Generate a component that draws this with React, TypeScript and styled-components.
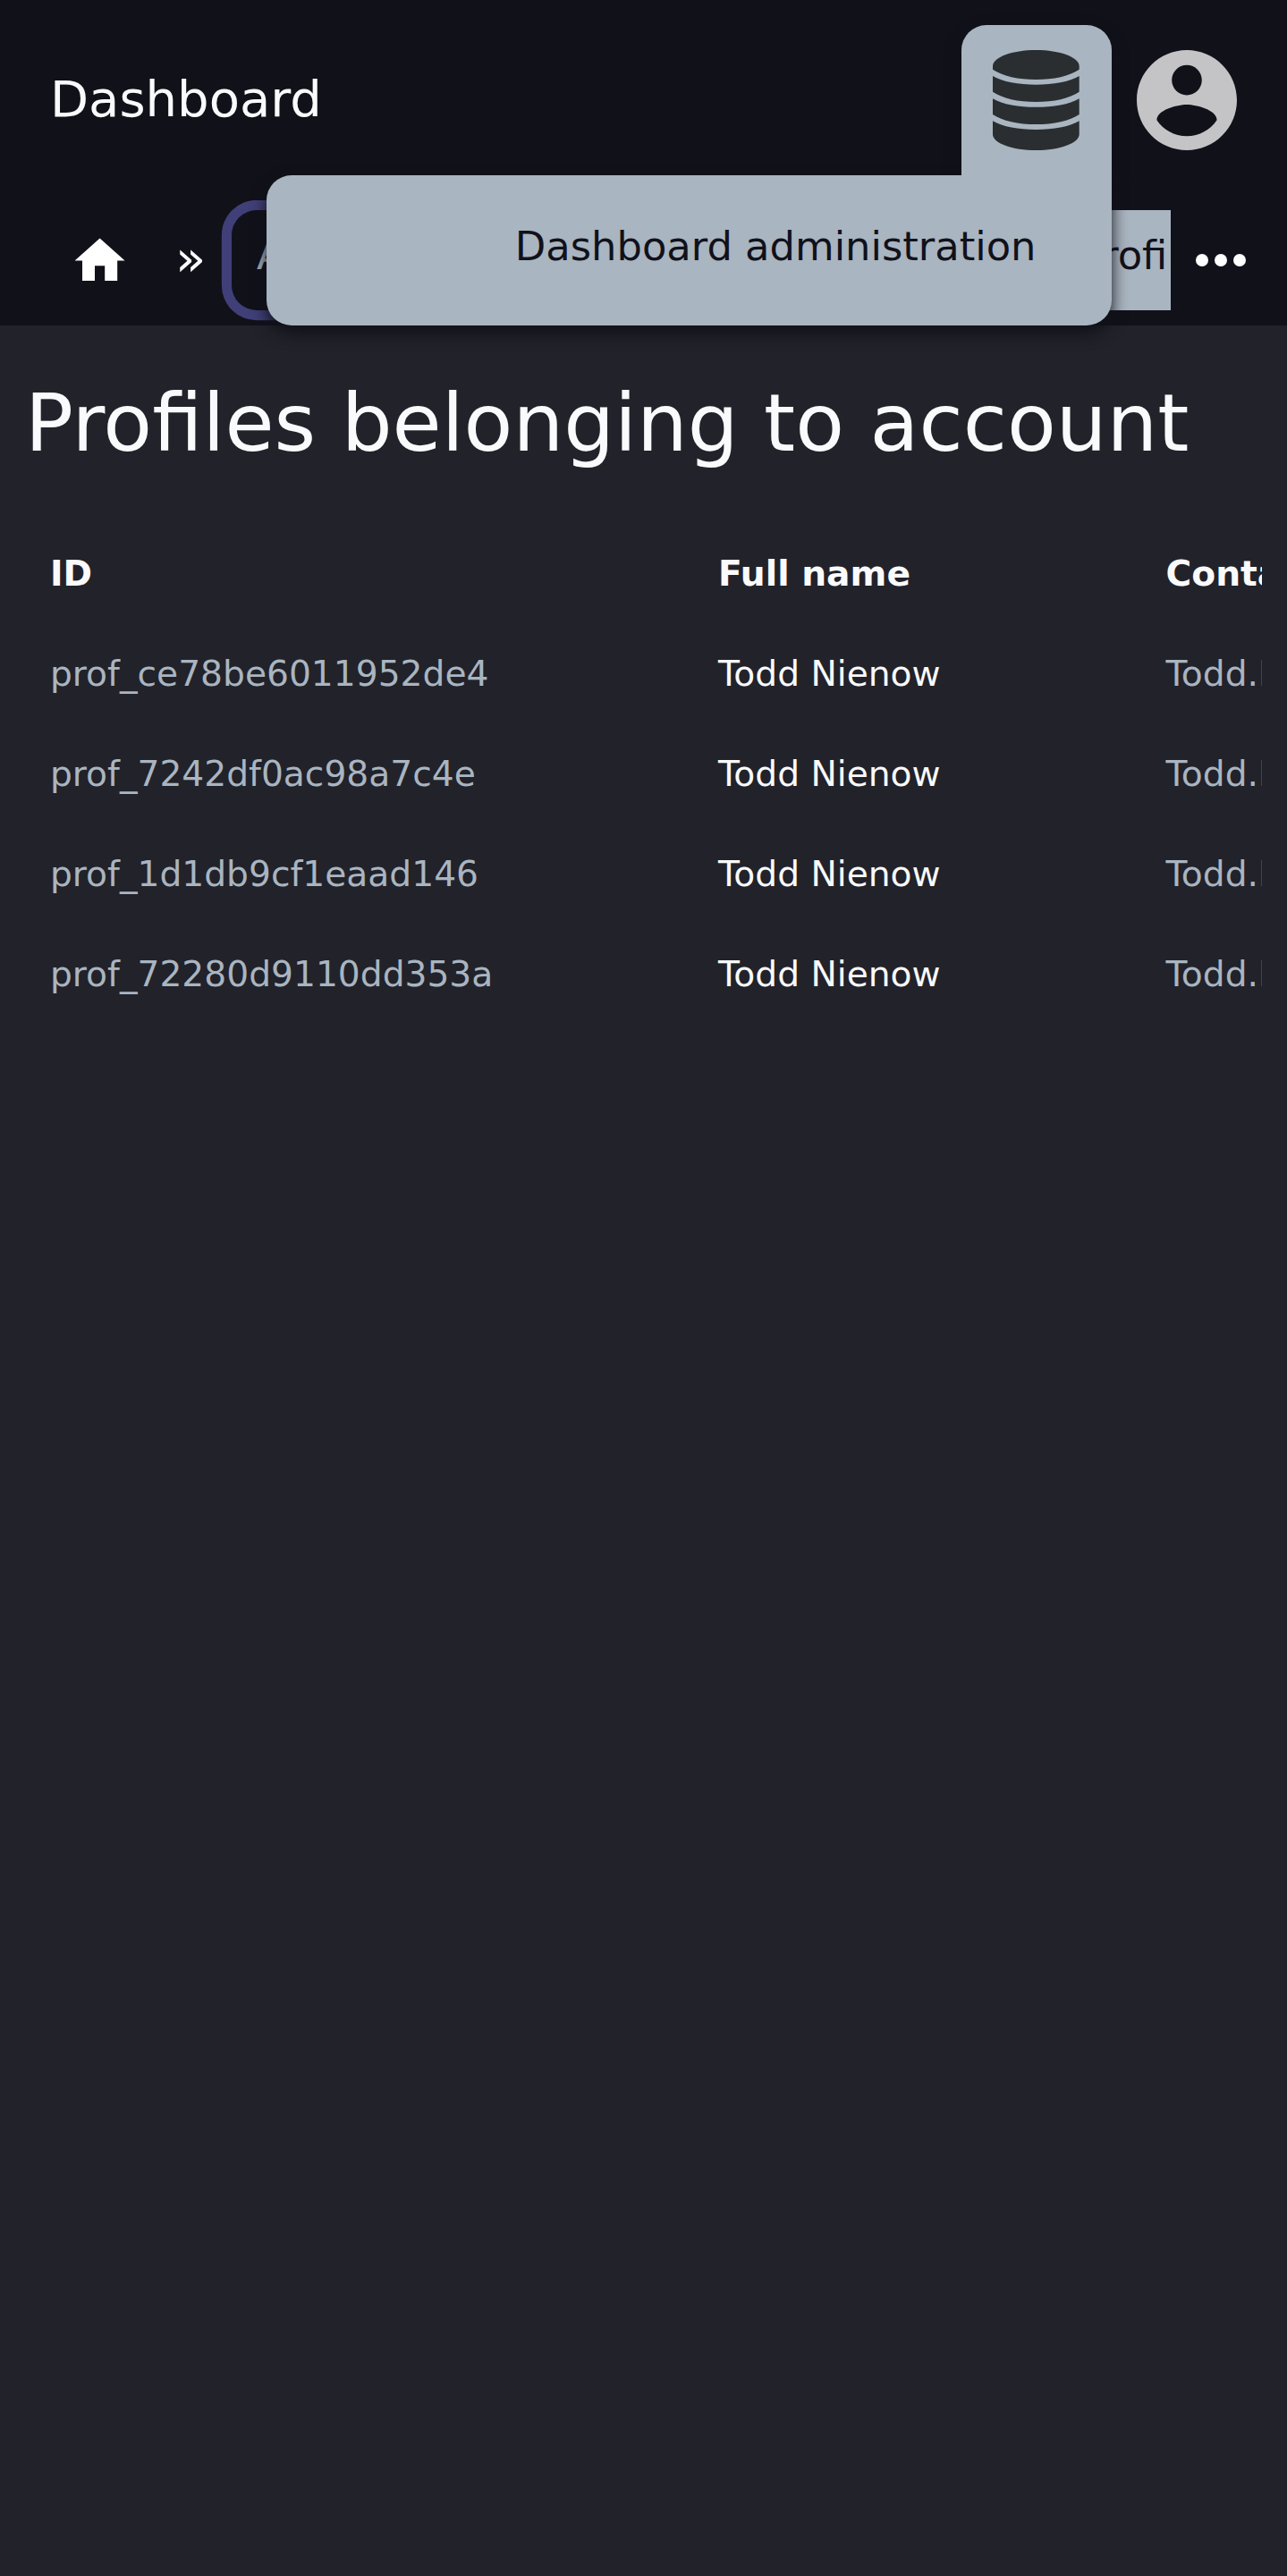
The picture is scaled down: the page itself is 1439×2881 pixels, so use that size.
import React from 'react';
import styled, { createGlobalStyle, css } from 'styled-components';

const color = {
  header: '#11111a',
  page: '#22222a',
  text: '#f9fafb',
  muted: '#a9b5c0',
  focus: '#403f78',
  avatar: '#c4c4c6',
  database: '#2a2e30',
};

const GlobalStyle = createGlobalStyle`
  *, *::before, *::after { box-sizing: border-box; }
  html { font-size: 56px; }
  body {
    margin: 0;
    background: ${color.page};
    color: ${color.text};
    font-family: 'DejaVu Sans', sans-serif;
    overflow: hidden;
  }
  svg { display: block; }
`;

const Page = styled.div`
  min-height: 2881px;
  background: ${color.page};
`;

const Header = styled.header`
  height: 6.5rem;
  background: ${color.header};
`;

const TitleBar = styled.div`
  display: flex;
  align-items: center;
  height: 4rem;
  padding: 0 56.5px 0 1rem;
`;

const Brand = styled.div`
  flex: 1;
  font-size: 1rem;
  line-height: 65px;
  padding-bottom: 3px;
`;

const floating = css`
  background: ${color.muted};
  box-shadow: 0 0.15rem 0.3rem ${color.header};
`;

const AdminMenu = styled.div`
  position: relative;
  z-index: 2;
  width: 3rem;
  height: 3rem;
  margin-right: 0.5rem;
`;

const MenuTrigger = styled.button`
  ${floating}
  position: relative;
  z-index: 1;
  clip-path: inset(-1rem -1rem 0 -1rem);
  display: flex;
  align-items: center;
  justify-content: center;
  width: 100%;
  height: 100%;
  padding: 0;
  border: 0;
  border-radius: 0.5rem 0.5rem 0 0;
`;

const MenuPanel = styled.div`
  ${floating}
  position: absolute;
  top: 100%;
  right: 0;
  display: flex;
  justify-content: flex-end;
  width: 945px;
  height: 3rem;
  padding: 0 1.5rem;
  border-radius: 0.5rem 0 0.5rem 0.5rem;
  color: ${color.header};
`;

const MenuItem = styled.a`
  font-size: 0.8rem;
  line-height: 159px;
  white-space: nowrap;
`;

const CrumbBar = styled.nav`
  display: flex;
  height: 2.5rem;
  padding-left: 1rem;
`;

const HomeLink = styled.a`
  display: flex;
  align-items: center;
  justify-content: center;
  width: 112px;
  height: 136px;
`;

const CrumbScroller = styled.div`
  display: flex;
  align-items: flex-start;
  width: 1141px;
  height: 100%;
  padding-top: 10.5px;
  overflow: hidden;
`;

const Separator = styled.span`
  flex: none;
  width: 91px;
  padding-left: 28px;
  font-size: 1rem;
  line-height: 108px;
`;

const Crumb = styled.a<{ $focused?: boolean; $current?: boolean; $width?: number }>`
  flex: none;
  width: ${(p) => (p.$width ? `${p.$width}px` : 'auto')};
  height: 2rem;
  padding: 0 0.5rem;
  border-radius: 0.5rem;
  font-size: 0.8rem;
  line-height: 102px;
  color: ${(p) => (p.$current ? color.header : color.muted)};
  background: ${(p) => (p.$current ? color.muted : 'transparent')};
  box-shadow: ${(p) => (p.$focused ? `0 0 0 0.2rem ${color.focus}` : 'none')};
`;

const MoreButton = styled.button`
  display: flex;
  align-items: center;
  justify-content: center;
  width: 112px;
  height: 133px;
  padding: 0;
  border: 0;
  background: none;
`;

const Main = styled.main`
  padding: 0 28.5px 0 0.5rem;
`;

const Heading = styled.h1`
  margin: 0;
  padding-top: 56px;
  font-size: 1.6rem;
  font-weight: 400;
  line-height: 106px;
  white-space: nowrap;
`;

const TableScroller = styled.div`
  margin-top: 60px;
  overflow: hidden;
`;

const Table = styled.div`
  display: grid;
  grid-template-columns: 747px 500.5px 700px;
  grid-auto-rows: 2rem;
`;

const Cell = styled.div<{ $head?: boolean; $muted?: boolean }>`
  padding: 0 0.5rem;
  font-size: 0.7rem;
  line-height: 112px;
  font-weight: ${(p) => (p.$head ? 700 : 400)};
  color: ${(p) => (p.$muted ? color.muted : color.text)};
  white-space: nowrap;
`;

const DatabaseIcon = () => (
  <svg width="96.7" height="112" viewBox="0 0 96.7 112" fill={color.database}>
    <path d="M0 18C0 8 21.6 0 48.35 0S96.7 8 96.7 18v3.7C86 29 68 33 48.35 33S10.7 29 0 21.7z" />
    <path d="M0 29c11 6.5 29 9.7 48.35 9.7S85.7 35.5 96.7 29v17.7C86 54 68 58 48.35 58S10.7 54 0 46.7z" />
    <path d="M0 54.2c11 6.5 29 9.6 48.35 9.6S85.7 60.7 96.7 54.2v17.7C86 79.2 68 83 48.35 83S10.7 79.2 0 71.9z" />
    <path d="M0 79.2c11 6.5 29 9.7 48.35 9.7S85.7 85.7 96.7 79.2v15C96.7 104 75 112 48.35 112S0 104 0 94.2z" />
  </svg>
);

const AccountIcon = () => (
  <svg width="112" height="112" viewBox="2 2 20 20" fill={color.avatar}>
    <path d="M12 2C6.48 2 2 6.48 2 12s4.48 10 10 10 10-4.48 10-10S17.52 2 12 2zm0 3c1.66 0 3 1.34 3 3s-1.34 3-3 3-3-1.34-3-3 1.34-3 3-3zm0 14.2c-2.5 0-4.71-1.28-6-3.22.03-1.99 4-3.08 6-3.08 1.99 0 5.97 1.09 6 3.08-1.29 1.94-3.5 3.22-6 3.22z" />
  </svg>
);

const HomeIcon = () => (
  <svg width="67.2" height="67.2" viewBox="0 0 24 24" fill="#fff">
    <path d="M10 20v-6h4v6h5v-8h3L12 3 2 12h3v8z" />
  </svg>
);

const MoreIcon = () => (
  <svg width="84" height="84" viewBox="0 0 24 24" fill="#fff">
    <circle cx="6" cy="12" r="2" />
    <circle cx="12" cy="12" r="2" />
    <circle cx="18" cy="12" r="2" />
  </svg>
);

const profiles = [
  'prof_ce78be6011952de4',
  'prof_7242df0ac98a7c4e',
  'prof_1d1db9cf1eaad146',
  'prof_72280d9110dd353a',
];

export default function App() {
  return (
    <Page>
      <GlobalStyle />
      <Header>
        <TitleBar>
          <Brand>Dashboard</Brand>
          <AdminMenu>
            <MenuTrigger aria-label="Administration">
              <DatabaseIcon />
            </MenuTrigger>
            <MenuPanel>
              <MenuItem>Dashboard administration</MenuItem>
            </MenuPanel>
          </AdminMenu>
          <AccountIcon />
        </TitleBar>
        <CrumbBar>
          <HomeLink aria-label="Home">
            <HomeIcon />
          </HomeLink>
          <CrumbScroller>
            <Separator>»</Separator>
            <Crumb $focused $width={828}>Accounts</Crumb>
            <Separator>»</Separator>
            <Crumb $current>Profiles</Crumb>
          </CrumbScroller>
          <MoreButton aria-label="More">
            <MoreIcon />
          </MoreButton>
        </CrumbBar>
      </Header>
      <Main>
        <Heading>Profiles belonging to account</Heading>
        <TableScroller>
          <Table>
            <Cell $head>ID</Cell>
            <Cell $head>Full name</Cell>
            <Cell $head>Contact</Cell>
            {profiles.map((id) => (
              <React.Fragment key={id}>
                <Cell $muted>{id}</Cell>
                <Cell>Todd Nienow</Cell>
                <Cell $muted>Todd.Nienow</Cell>
              </React.Fragment>
            ))}
          </Table>
        </TableScroller>
      </Main>
    </Page>
  );
}
